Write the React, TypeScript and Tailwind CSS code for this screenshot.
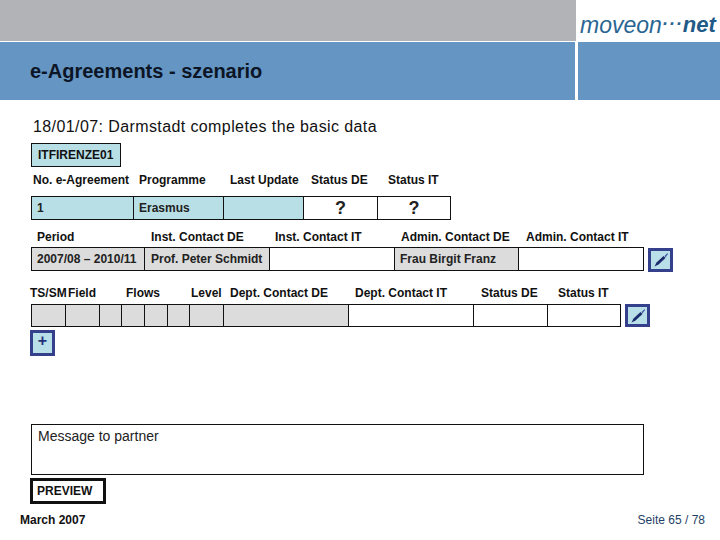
const F = "font-['Liberation_Sans',Arial,sans-serif]";

function Pencil() {
  return (
    <svg width="18" height="18" viewBox="0 0 18 18">
      <path d="M2.5 15.5 L4.5 11.5 L11.5 5 L13.5 7 L6.5 13.5 Z" fill="#1c2a6e" />
      <path d="M12.5 5 L15.5 2 L16 3 L13.5 6.5 Z" fill="#4a5aa8" />
    </svg>
  );
}

function IconBox({ className, children }: { className: string; children: React.ReactNode }) {
  return (
    <div className={`flex shrink-0 items-center justify-center border-[3px] border-[#35408c] bg-[#b9dfe8] ${className}`}>
      {children}
    </div>
  );
}

function Labels({ items, className }: { items: [string, number][]; className: string }) {
  return (
    <div className={`flex text-xs font-bold leading-[14px] text-[#111] ${className}`}>
      {items.map(([t, w], i) => (
        <span key={i} style={{ width: w }} className="shrink-0 whitespace-nowrap">{t}</span>
      ))}
    </div>
  );
}

type C = { w: number; t?: string; bg?: string; q?: boolean; pl?: number };

function Row({ cells, className }: { cells: C[]; className: string }) {
  return (
    <div className={`flex border border-[#111] text-xs font-bold text-[#222] ${className}`}>
      {cells.map((c, i) => (
        <div
          key={i}
          style={{ width: c.w, background: c.bg, paddingLeft: c.pl ?? 5 }}
          className={`flex shrink-0 items-center whitespace-nowrap border-r border-[#111] last:border-r-0 ${c.q ? "justify-center text-lg text-[#222]" : ""}`}
        >
          {c.t}
        </div>
      ))}
    </div>
  );
}

const teal = "#b9dfe6";
const gray = "#dcdcdc";

export default function App() {
  return (
    <div className={`flex h-[540px] w-[720px] flex-col overflow-hidden bg-white ${F}`}>
      <div className="flex h-[41px] shrink-0">
        <div className="w-[576px] bg-[#b1b3b7]" />
        <div className="flex flex-1 items-end whitespace-nowrap pb-[3px] pl-[4px] text-[23px] italic leading-[26px] text-[#2a6592]">
          <span>moveon</span>
          <span className="text-lg font-bold tracking-[1px]">···</span>
          <span className="text-[22px] font-bold text-[#1f5a88]">net</span>
        </div>
      </div>
      <div className="mt-[1px] flex h-[58px] shrink-0 gap-[3px]">
        <div className="flex w-[575px] items-center bg-[#6595c2] pl-[30px] text-xl font-bold leading-none text-[#0c1526]">
          e-Agreements - szenario
        </div>
        <div className="flex-1 bg-[#6595c2]" />
      </div>

      <div className="mt-[18px] pl-[33px] text-base leading-[18px] tracking-[0.4px] text-[#111]">
        18/01/07: Darmstadt completes the basic data
      </div>
      <div className="ml-[31px] mt-[7px] flex h-[24px] w-[90px] items-center border border-[#111] bg-[#b9dfe6] pl-[6px] text-xs font-bold text-[#111]">
        ITFIRENZE01
      </div>

      <Labels
        className="ml-[33px] mt-[6px]"
        items={[["No. e-Agreement", 106], ["Programme", 91], ["Last Update", 81], ["Status DE", 77], ["Status IT", 60]]}
      />
      <Row
        className="ml-[31px] mt-[9px] h-[24px] w-[420px]"
        cells={[
          { w: 102, t: "1", bg: teal },
          { w: 90, t: "Erasmus", bg: teal },
          { w: 80, bg: teal },
          { w: 74, t: "?", q: true, pl: 0 },
          { w: 72, t: "?", q: true, pl: 0 },
        ]}
      />

      <Labels
        className="ml-[37px] mt-[10px]"
        items={[["Period", 114], ["Inst. Contact DE", 124], ["Inst. Contact IT", 126], ["Admin. Contact DE", 125], ["Admin. Contact IT", 110]]}
      />
      <div className="ml-[31px] mt-[3px] flex items-start">
        <Row
          className="h-[24px] w-[613px]"
          cells={[
            { w: 113, t: "2007/08 – 2010/11", bg: gray },
            { w: 125, t: "Prof. Peter Schmidt", bg: gray, pl: 6 },
            { w: 125 },
            { w: 124, t: "Frau Birgit Franz", bg: gray },
            { w: 124 },
          ]}
        />
        <IconBox className="ml-[4px] mt-[1px] h-[24px] w-[25px]"><Pencil /></IconBox>
      </div>

      <Labels
        className="ml-[30px] mt-[14px]"
        items={[["TS/SM", 38], ["Field", 58], ["Flows", 65], ["Level", 39], ["Dept. Contact DE", 125], ["Dept. Contact IT", 126], ["Status DE", 77], ["Status IT", 60]]}
      />
      <div className="ml-[31px] mt-[4px] flex items-start">
        <Row
          className="h-[23px] w-[590px]"
          cells={[
            { w: 34, bg: gray }, { w: 34, bg: gray }, { w: 22, bg: gray }, { w: 23, bg: gray },
            { w: 23, bg: gray }, { w: 22, bg: gray }, { w: 34, bg: gray }, { w: 125, bg: gray },
            { w: 125 }, { w: 74 }, { w: 74 },
          ]}
        />
        <IconBox className="ml-[4px] h-[23px] w-[25px]"><Pencil /></IconBox>
      </div>
      <IconBox className="ml-[30px] mt-[3px] h-[26px] w-[25px] pb-[5px] text-base font-bold leading-none text-[#26307a]">+</IconBox>

      <div className="ml-[31px] mt-[68px] h-[51px] w-[613px] border border-[#111] pl-[6px] pt-[3px] text-sm leading-[16px] text-[#222]">
        Message to partner
      </div>
      <div className="ml-[30px] mt-[3px] flex h-[26px] w-[76px] items-center border-[3px] border-[#111] pl-[4px] text-xs font-bold text-[#111]">
        PREVIEW
      </div>
      <div className="mt-[9px] flex justify-between pl-[20px] pr-[15px] text-xs leading-[14px]">
        <span className="font-bold text-[#111]">March 2007</span>
        <span className="text-[#1f3f66]">Seite 65 / 78</span>
      </div>
    </div>
  );
}
